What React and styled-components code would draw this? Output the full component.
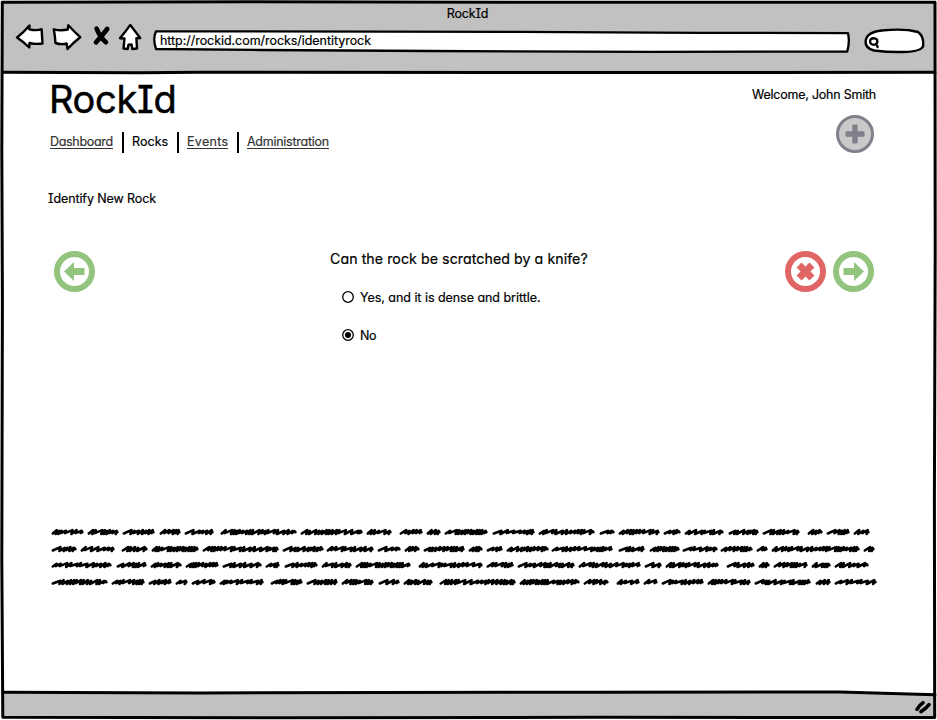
import React from "react";
import styled, { createGlobalStyle } from "styled-components";

const GlobalStyle = createGlobalStyle`
  * { box-sizing: border-box; }
  body {
    margin: 0;
    background: #fff;
    color: #000;
    font: 400 12.5px/20px Inter, "Open Sans", sans-serif;
    font-feature-settings: "cv11" 1, "cv08" 1;
    -webkit-text-stroke: 0.2px currentColor;
  }
`;

const Browser = styled.div`
  position: relative;
  width: 937px;
  height: 720px;
  padding: 2px 2px 2px 3px;
  display: flex;
  flex-direction: column;
  overflow: hidden;
`;

const FrameLines = styled.svg`
  position: absolute;
  inset: 0;
  width: 937px;
  height: 720px;
  fill: none;
  stroke: #000;
  stroke-width: 3;
  stroke-linejoin: round;
  stroke-linecap: round;
  pointer-events: none;
`;

const Chrome = styled.header`
  height: 71px;
  flex: none;
  background: #c1c1c1;
`;

const WindowTitle = styled.div`
  height: 22px;
  padding: 2px 3px 0 0;
  text-align: center;
  letter-spacing: -0.15px;
`;

const Toolbar = styled.div`
  display: flex;
  height: 34px;
  padding-left: 11px;
`;

const Icon = styled.svg`
  display: block;
  flex: none;
  width: ${(p) => p.$w}px;
  height: ${(p) => p.$h}px;
  margin-right: ${(p) => p.$gap || 0}px;
  fill: ${(p) => (p.$strokes ? "none" : "#fff")};
  stroke: #000;
  stroke-width: ${(p) => p.$strokes || 2.4};
  stroke-linejoin: round;
  stroke-linecap: round;
`;

const Field = styled.div`
  position: relative;
  width: ${(p) => p.$w}px;
  height: 34px;
  margin-right: ${(p) => p.$gap || 0}px;
  padding: 7px 0 0 8px;
`;

const FieldShape = styled.svg`
  position: absolute;
  inset: 0;
  width: 100%;
  height: 100%;
  fill: #fff;
  stroke: #000;
  stroke-width: 2.3;
  stroke-linejoin: round;
`;

const Address = styled.span`
  position: relative;
  letter-spacing: ${(p) => p.$track}px;
`;

const Page = styled.main`
  flex: 1;
  padding: 7px 59px 0 45px;
`;

const SiteHeader = styled.div`
  display: flex;
  justify-content: space-between;
  height: 109px;
`;

const Brand = styled.h1`
  margin: 0 0 14px 1px;
  font-size: 38px;
  line-height: 38px;
  font-weight: 400;
  letter-spacing: ${(p) => p.$track}px;
  -webkit-text-stroke: 0.5px currentColor;
`;

const Nav = styled.nav`
  display: flex;
  align-items: flex-start;
  padding-left: 2px;
`;

const NavItem = styled.span`
  width: ${(p) => p.$w}px;
  height: 17px;
  line-height: 20px;
  white-space: nowrap;
  letter-spacing: ${(p) => p.$track || 0}px;
  color: ${(p) => (p.$current ? "#000" : "#333")};
  border-bottom: ${(p) => (p.$current ? "none" : "1px solid #333")};
`;

const Divider = styled.span`
  width: 2px;
  height: 21px;
  margin: 0 8px 0 9px;
  background: #000;
`;

const Account = styled.div`
  display: flex;
  flex-direction: column;
  align-items: flex-end;
  padding-top: 5px;
  white-space: nowrap;
`;

const Welcome = styled.span`
  letter-spacing: ${(p) => p.$track}px;
  margin-bottom: 10px;
`;

const RoundButton = styled.button`
  width: ${(p) => p.$size}px;
  height: ${(p) => p.$size}px;
  padding: 0;
  border: ${(p) => p.$ring}px solid ${(p) => p.$color};
  border-radius: 50%;
  background: ${(p) => p.$fill || "#fff"};
  color: ${(p) => p.$color};
  display: grid;
  place-items: center;
  margin-right: ${(p) => p.$gap || 0}px;

  svg { display: block; fill: currentColor; }
`;

const SectionTitle = styled.div`
  letter-spacing: ${(p) => p.$track}px;
  height: 62px;
`;

const Wizard = styled.section`
  display: grid;
  grid-template-columns: 282px 1fr auto;
  height: 275px;
`;

const Step = styled.div`
  padding-left: 6px;
  display: flex;
  align-items: flex-start;
`;

const Actions = styled(Step)`
  padding: 0;
  gap: 7px;
  margin-right: 2px;
`;

const Question = styled.div`
  font-size: 14.2px;
  line-height: 16px;
  letter-spacing: ${(p) => p.$track}px;
  margin-bottom: 21px;
`;

const Option = styled.label`
  display: flex;
  align-items: center;
  gap: 6px;
  height: 18px;
  margin: 0 0 20px 12px;
  letter-spacing: ${(p) => p.$track}px;
`;

const OptionText = styled.span`
  line-height: 18px;
  padding-top: 2px;
`;

const Radio = styled.svg`
  display: block;
  width: 12px;
  height: 12px;
  fill: #000;

  circle:first-child {
    fill: #fff;
    stroke: #000;
    stroke-width: 1.3;
  }
`;

const Scribbles = styled.svg`
  display: block;
  width: 829px;
  height: 72px;
  fill: none;
  stroke: #000;
  stroke-width: 2.6;
  stroke-linejoin: round;
  stroke-linecap: round;
`;

const Footer = styled.footer`
  flex: none;
  height: 25px;
  display: flex;
  justify-content: flex-end;
  align-items: center;
  padding: 2px 4px 0 0;
  background: #c1c1c1;
`;

// Baseline offset, then start and end of every scribbled word.
const scribbleLines = [
  [6, 52,83, 88,118, 123,154, 160,180, 185,213, 221,296, 301,362, 367,391, 400,422, 427,440, 445,487, 493,534, 539,594, 600,614, 619,659, 664,680, 685,723, 729,758, 763,799, 808,822, 827,849, 854,869],
  [23, 52,76, 81,114, 122,147, 152,198, 203,278, 283,323, 327,373, 378,400, 405,419, 424,464, 469,482, 487,502, 507,548, 552,612, 619,644, 650,679, 683,717, 721,752, 757,767, 772,859, 864,874],
  [39, 52,111, 117,146, 151,181, 186,218, 223,261, 266,279, 285,317, 322,351, 356,410, 419,482, 487,513, 518,574, 579,640, 645,661, 666,718, 727,754, 759,769, 774,807, 812,830, 835,868],
  [56, 52,107, 112,144, 149,171, 176,187, 192,215, 220,263, 271,302, 307,337, 342,373, 379,399, 404,432, 440,515, 520,579, 584,608, 617,639, 644,657, 662,703, 708,750, 755,810, 816,830, 835,876],
];

function wordPath(start, end, y, seed) {
  let x = start - 47.2;
  const stop = end - 49.5;
  let n = seed;
  let d = `M${x} ${y + 1.5}`;
  while (x < stop - 3) {
    n = (n * 73 + 41) % 211;
    const step = [2.6, 3.2, 4.2, 6.4][n % 4];
    const low = n % 3 ? 2 : 1.1;
    const high = n % 5 > 1 ? 1.9 : 1.2;
    x = Math.min(x + step, stop - 1);
    d += `L${(x + 1.2).toFixed(1)} ${y - high}L${(x + 0.2).toFixed(1)} ${y + low}`;
  }
  return d + `L${stop} ${y - 0.8}L${stop + 0.9} ${y + 0.2}`;
}

const arrowPath = "M0 9.5 10 0V6H20.5V13H10V19Z";

export default function App() {
  return (
    <>
      <GlobalStyle />
      <Browser>
        <Chrome>
          <WindowTitle>RockId</WindowTitle>
          <Toolbar>
            <Icon $w={30} $h={28} $gap={7} viewBox="14 24 30 28">
              <path d="M17 37.5Q23 33 29.5 25.5L29.3 29.3Q36 31 41.6 29.2L42.5 43.5Q36 44.5 29.5 43L29.3 47.5Q23 41.5 17 37.5Z" />
            </Icon>
            <Icon $w={31} $h={30} $gap={9} viewBox="51 24 31 30">
              <path d="M53.8 29.3Q61 31 67.7 29.5L68.3 25.3Q74.5 32 80.2 37.2Q74 42 67.5 49L66.6 43.5Q61 45 55.5 43Q55 36 53.8 29.3Z" />
            </Icon>
            <Icon $w={22} $h={24} $gap={5} $strokes={4.7} viewBox="91 24 22 24">
              <path d="M96.6 28.6Q100 37 105.9 42.3M107.2 29Q102 36 96 42.3" />
            </Icon>
            <Icon $w={26} $h={32} $gap={8} viewBox="118 24 26 32">
              <path d="M130.3 24.9Q135 31 140.2 38L136.4 38.2L137 48.5L132.4 49L131.5 44.5L128.5 44.6L127.7 49L123.5 48.5L124.5 38.5L120 38.3Q126 31 130.3 24.9Z" />
            </Icon>
            <Field $w={698} $gap={12}>
              <FieldShape viewBox="152 24 698 34">
                <path d="M156 31.3L520 31.8L700 32.8L848 33.2Q850 42 847.2 51.6L650 51.8L430 51L260 50L156 49Q152.5 39 156 31.3Z" />
              </FieldShape>
              <Address $track={-0.05}>http://rockid.com/rocks/identityrock</Address>
            </Field>
            <Icon $w={66} $h={32} viewBox="862 24 66 32">
              <path d="M865.6 41Q866.8 31.5 884 30.3Q904 28.3 918 32Q924 36 923.2 46Q921.5 51.5 903 52Q888 52.3 874 50.5Q865 48 865.6 41Z" />
              <path d="M870.7 39.3Q874 36.8 877 39.7Q878.5 44 873.6 44.9Q868.5 44 870.7 39.3ZM876.3 44L877.6 46.9" />
            </Icon>
          </Toolbar>
        </Chrome>

        <Page>
          <SiteHeader>
            <div>
              <Brand $track={-0.3}>RockId</Brand>
              <Nav>
                <NavItem $w={63} $track={-0.3}>Dashboard</NavItem>
                <Divider />
                <NavItem $current $w={36} $track={0.05}>Rocks</NavItem>
                <Divider />
                <NavItem $w={41} $track={0.3}>Events</NavItem>
                <Divider />
                <NavItem $w={82} $track={-0.26}>Administration</NavItem>
              </Nav>
            </div>
            <Account>
              <Welcome $track={-0.23}>Welcome, John Smith</Welcome>
              <RoundButton $size={38} $ring={3} $gap={2} $color="#7f808a" $fill="#c9c9ca" aria-label="Add">
                <svg width="20" height="20" viewBox="0 0 20 20">
                  <path d="M7.3 1.5Q7.3.5 8.3.5h3.4q1 0 1 1v5.8h5.8q1 0 1 1v3.4q0 1-1 1h-5.8v5.8q0 1-1 1H8.3q-1 0-1-1v-5.8H1.5q-1 0-1-1V8.3q0-1 1-1h5.8z" />
                </svg>
              </RoundButton>
            </Account>
          </SiteHeader>

          <SectionTitle $track={-0.1}>Identify New Rock</SectionTitle>

          <Wizard>
            <Step>
              <RoundButton $size={41} $ring={6} $color="#93c47d" aria-label="Back">
                <svg width="21" height="19" viewBox="0 0 21 19"><path d={arrowPath} /></svg>
              </RoundButton>
            </Step>
            <div>
              <Question $track={0.06}>Can the rock be scratched by a knife?</Question>
              <Option $track={-0.04}>
                <Radio viewBox="0 0 12 12"><circle cx="6" cy="6" r="5.3" /></Radio>
                <OptionText>Yes, and it is dense and brittle.</OptionText>
              </Option>
              <Option $track={-0.4}>
                <Radio viewBox="0 0 12 12"><circle cx="6" cy="6" r="5.3" /><circle cx="6" cy="6" r="3" /></Radio>
                <OptionText>No</OptionText>
              </Option>
            </div>
            <Actions>
              <RoundButton $size={41} $ring={6} $color="#e06666" aria-label="Cancel">
                <svg width="21" height="21" viewBox="0 0 20 20">
                  <path d="M1.5 6.2 6.2 1.5 10 5.3 13.8 1.5 18.5 6.2 14.7 10 18.5 13.8 13.8 18.5 10 14.7 6.2 18.5 1.5 13.8 5.3 10Z" />
                </svg>
              </RoundButton>
              <RoundButton $size={41} $ring={6} $color="#93c47d" aria-label="Next">
                <svg width="21" height="19" viewBox="0 0 21 19">
                  <path d={arrowPath} transform="translate(21 0) scale(-1 1)" />
                </svg>
              </RoundButton>
            </Actions>
          </Wizard>

          <Scribbles viewBox="0 0 829 72">
            {scribbleLines.map(([y, ...ends]) =>
              ends.map((end, i) =>
                i % 2 ? <path key={`${y}-${i}`} d={wordPath(ends[i - 1], end, y, (i * 17 + y) % 211)} /> : null
              )
            )}
          </Scribbles>
        </Page>

        <Footer>
          <Icon $w={17} $h={16} $strokes={3.6} viewBox="914 699 17 16">
            <path d="M917 709.3Q919.5 705 923 702.7M921 711.7Q925 709.5 929 704.7" />
          </Icon>
        </Footer>

        <FrameLines viewBox="0 0 937 720">
          <path d="M2.3 2.2L250 1.8L600 2.3L935 2.2L935.2 250L934.4 500L934.7 717.5L600 717.3L300 717.8L2.8 717.2L1.8 560L2.4 300L1.8 150Z" />
          <path d="M3 72.3L140 72.7L200 72.3L520 72.6L935 72.3" />
          <path d="M3 692.3L200 692.9L600 692.2L840 691.9L935 694.8" />
        </FrameLines>
      </Browser>
    </>
  );
}
